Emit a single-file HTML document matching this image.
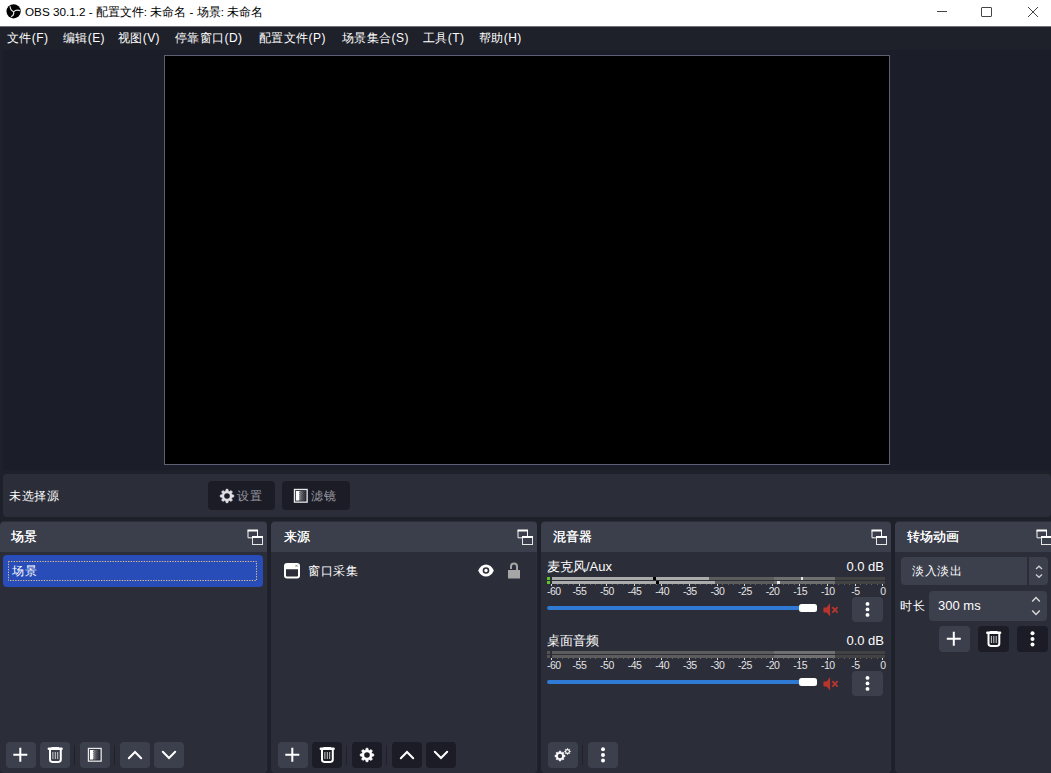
<!DOCTYPE html>
<html><head><meta charset="utf-8">
<style>
*{margin:0;padding:0;box-sizing:border-box}
html,body{width:1051px;height:773px;overflow:hidden;background:#1f212a;font-family:"Liberation Sans",sans-serif;color:#fefefe}
.a{position:absolute}
.txt{white-space:nowrap;position:absolute;line-height:1}
svg{position:absolute;overflow:visible}
#title{left:0;top:0;width:1051px;height:26px;background:#fff;color:#000;font-size:12px}
#menubar{left:0;top:26px;width:1051px;height:24px;background:#1f212a;font-size:12px;color:#fefefe}
#menubar span{position:absolute;top:6px;white-space:nowrap;line-height:1;letter-spacing:0.4px}
#prevwrap{left:3px;top:50px;width:1048px;height:420px;background:#1b1d28}
#preview{left:164px;top:55px;width:726px;height:410px;background:#000;border:1px solid #5e5f74}
#ctx{left:3px;top:474px;width:1048px;height:43px;background:#2b2d38;border-radius:4px}
.dbtn{position:absolute;background:#1b1c25;border-radius:4px}
.ebtn{position:absolute;background:#3c3f4c;border-radius:4px}
.dock{position:absolute;background:#2b2d38;border-radius:4px;box-shadow:inset -1px 0 #2e303b}
.dhead{position:absolute;background:#3b3e4b;border-radius:4px 4px 0 0;height:30px}
.dtitle{font-size:13px;text-shadow:0.4px 0 0 #fefefe}
.sep{position:absolute;width:1px;height:20px;background:#1f2029}
.lbl{font-size:10.5px;letter-spacing:-0.45px;color:#e4e4e4}
</style></head><body>
<svg width="0" height="0" style="position:absolute;left:0;top:0">
<defs>
 <symbol id="i-plus" viewBox="0 0 30 26"><path d="M14.3 5.8V19.8M7.3 12.8H21.3" stroke="#fff" stroke-width="2" fill="none"/></symbol>
 <symbol id="i-trash" viewBox="0 0 30 26"><path d="M8.8 6.8H21.6" stroke="#fff" stroke-width="2.4" stroke-linecap="round"/><path d="M12 5.8H18.4" stroke="#fff" stroke-width="1.6" stroke-linecap="round"/><path d="M10 8V17.6A2.3 2.3 0 0 0 12.3 19.9H18.5A2.3 2.3 0 0 0 20.8 17.6V8" stroke="#fff" stroke-width="2" fill="none"/><path d="M12.9 10V17M15.3 10V17M17.7 10V17" stroke="#e0e0e0" stroke-width="0.9"/></symbol>
 <symbol id="i-filter" viewBox="0 0 30 26"><rect x="8.45" y="6.45" width="12.7" height="12.7" fill="#2a2c36" stroke="#e8e8ea" stroke-width="1.3"/><rect x="9.9" y="8" width="3.4" height="9.6" fill="#fff"/><rect x="13.3" y="8.00" width="1.1" height="0.95" fill="#e6e6e6"/><rect x="13.3" y="9.90" width="1.1" height="0.95" fill="#e6e6e6"/><rect x="13.3" y="11.80" width="1.1" height="0.95" fill="#e6e6e6"/><rect x="13.3" y="13.70" width="1.1" height="0.95" fill="#e6e6e6"/><rect x="13.3" y="15.60" width="1.1" height="0.95" fill="#e6e6e6"/><rect x="14.4" y="8.95" width="1.1" height="0.95" fill="#b8b9be"/><rect x="14.4" y="10.85" width="1.1" height="0.95" fill="#b8b9be"/><rect x="14.4" y="12.75" width="1.1" height="0.95" fill="#b8b9be"/><rect x="14.4" y="14.65" width="1.1" height="0.95" fill="#b8b9be"/><rect x="14.4" y="16.55" width="1.1" height="0.95" fill="#b8b9be"/><rect x="15.5" y="8.00" width="1.1" height="0.95" fill="#8a8b93"/><rect x="15.5" y="9.90" width="1.1" height="0.95" fill="#8a8b93"/><rect x="15.5" y="11.80" width="1.1" height="0.95" fill="#8a8b93"/><rect x="15.5" y="13.70" width="1.1" height="0.95" fill="#8a8b93"/><rect x="15.5" y="15.60" width="1.1" height="0.95" fill="#8a8b93"/><rect x="16.6" y="8.95" width="1.1" height="0.95" fill="#6a6b74"/><rect x="16.6" y="10.85" width="1.1" height="0.95" fill="#6a6b74"/><rect x="16.6" y="12.75" width="1.1" height="0.95" fill="#6a6b74"/><rect x="16.6" y="14.65" width="1.1" height="0.95" fill="#6a6b74"/><rect x="16.6" y="16.55" width="1.1" height="0.95" fill="#6a6b74"/><rect x="17.7" y="8.00" width="1.1" height="0.95" fill="#50525b"/><rect x="17.7" y="9.90" width="1.1" height="0.95" fill="#50525b"/><rect x="17.7" y="11.80" width="1.1" height="0.95" fill="#50525b"/><rect x="17.7" y="13.70" width="1.1" height="0.95" fill="#50525b"/><rect x="17.7" y="15.60" width="1.1" height="0.95" fill="#50525b"/></symbol>
 <symbol id="i-up" viewBox="0 0 30 26"><path d="M8.8 16.2L15 10L21.2 16.2" stroke="#fff" stroke-width="2" fill="none" stroke-linecap="round"/></symbol>
 <symbol id="i-down" viewBox="0 0 30 26"><path d="M8.8 9.8L15 16L21.2 9.8" stroke="#fff" stroke-width="2" fill="none" stroke-linecap="round"/></symbol>
 <symbol id="i-gear" viewBox="0 0 16 16"><path d="M6.83 2.93 L6.99 1.28 L9.01 1.28 L9.17 2.93 L10.75 3.59 L12.04 2.53 L13.47 3.96 L12.41 5.25 L13.07 6.83 L14.72 6.99 L14.72 9.01 L13.07 9.17 L12.41 10.75 L13.47 12.04 L12.04 13.47 L10.75 12.41 L9.17 13.07 L9.01 14.72 L6.99 14.72 L6.83 13.07 L5.25 12.41 L3.96 13.47 L2.53 12.04 L3.59 10.75 L2.93 9.17 L1.28 9.01 L1.28 6.99 L2.93 6.83 L3.59 5.25 L2.53 3.96 L3.96 2.53 L5.25 3.59Z" fill="#fff" stroke="#fff" stroke-width="0.7" stroke-linejoin="round"/><circle cx="8" cy="8" r="2.8" fill="#1b1c25"/></symbol>
 <symbol id="i-dots" viewBox="0 0 30 26"><circle cx="15" cy="7.2" r="2" fill="#fff"/><circle cx="15" cy="12.9" r="2" fill="#fff"/><circle cx="15" cy="18.6" r="2" fill="#fff"/></symbol>
 <symbol id="i-float" viewBox="0 0 17 17"><path d="M1 1.5V8.8H5M10.5 1.5V7" stroke="#f4f4f4" stroke-width="1" fill="none"/><rect x="0.5" y="0.5" width="10.5" height="2" fill="#fff"/><rect x="5.5" y="7.5" width="10" height="8" stroke="#e6e6e6" stroke-width="1" fill="none"/><rect x="5" y="7" width="11" height="2" fill="#fff"/></symbol>
 <symbol id="i-mute" viewBox="0 0 17 14"><path d="M0.6 4.6 H3.6 L7.1 0 V13.6 L3.6 9.4 H0.6 Q0 7 0.6 4.6Z" fill="#b8352d"/><path d="M9.3 4.2L14.6 9.6M14.6 4.2L9.3 9.6" stroke="#b8352d" stroke-width="1.9"/></symbol>
<symbol id="i-gear2" viewBox="0 0 16 16"><path d="M6.83 2.93 L6.99 1.28 L9.01 1.28 L9.17 2.93 L10.75 3.59 L12.04 2.53 L13.47 3.96 L12.41 5.25 L13.07 6.83 L14.72 6.99 L14.72 9.01 L13.07 9.17 L12.41 10.75 L13.47 12.04 L12.04 13.47 L10.75 12.41 L9.17 13.07 L9.01 14.72 L6.99 14.72 L6.83 13.07 L5.25 12.41 L3.96 13.47 L2.53 12.04 L3.59 10.75 L2.93 9.17 L1.28 9.01 L1.28 6.99 L2.93 6.83 L3.59 5.25 L2.53 3.96 L3.96 2.53 L5.25 3.59Z" fill="#fff" stroke="#fff" stroke-width="0.7" stroke-linejoin="round"/><circle cx="8" cy="8" r="2.9" fill="#3c3f4c"/></symbol>
</defs></svg>
<div id="title" class="a">
  <svg style="left:6px;top:4px" width="15" height="15" viewBox="0 0 15 15">
    <circle cx="7.6" cy="7.3" r="7.1" fill="#000"/>
    <path d="M7.6 7.8 C5.4 6.8 4.2 5.2 4.1 2.2 M7.6 7.8 C9.4 6 11.5 5.8 13.9 6.6 M7.6 7.8 C8 10 7.2 11.8 5 12.6" stroke="#e6e6e6" stroke-width="1.2" fill="none"/>
  </svg>
  <span class="txt" style="left:25px;top:6px;font-size:11.7px">OBS 30.1.2 - 配置文件: 未命名 - 场景: 未命名</span>
  <div class="a" style="left:937px;top:11px;width:10px;height:1px;background:#444"></div>
  <div class="a" style="left:981px;top:7px;width:11px;height:10px;border:1px solid #444;border-radius:1px"></div>
  <svg style="left:1028px;top:7px" width="10" height="10" viewBox="0 0 10 10"><path d="M0 0L10 10M10 0L0 10" stroke="#444" stroke-width="1"/></svg>
</div>
<div id="menubar" class="a">
  <span style="left:7px">文件(F)</span>
  <span style="left:63px">编辑(E)</span>
  <span style="left:118px">视图(V)</span>
  <span style="left:175px">停靠窗口(D)</span>
  <span style="left:259px">配置文件(P)</span>
  <span style="left:342px">场景集合(S)</span>
  <span style="left:423px">工具(T)</span>
  <span style="left:479px">帮助(H)</span>
</div>
<div class="a" style="left:0;top:26px;width:1051px;height:1px;background:#707178"></div>
<div id="prevwrap" class="a"></div>
<div id="preview" class="a"></div>

<!-- context bar -->
<div id="ctx" class="a"></div>
<span class="txt" style="left:9px;top:490px;font-size:12px;letter-spacing:0.6px">未选择源</span>
<div class="dbtn" style="left:208px;top:481px;width:67px;height:29px"></div>
<div class="dbtn" style="left:282px;top:481px;width:68px;height:29px"></div>
<svg style="left:219px;top:488px" width="16" height="16" viewBox="0 0 16 16"><path d="M6.83 2.93 L6.99 1.28 L9.01 1.28 L9.17 2.93 L10.75 3.59 L12.04 2.53 L13.47 3.96 L12.41 5.25 L13.07 6.83 L14.72 6.99 L14.72 9.01 L13.07 9.17 L12.41 10.75 L13.47 12.04 L12.04 13.47 L10.75 12.41 L9.17 13.07 L9.01 14.72 L6.99 14.72 L6.83 13.07 L5.25 12.41 L3.96 13.47 L2.53 12.04 L3.59 10.75 L2.93 9.17 L1.28 9.01 L1.28 6.99 L2.93 6.83 L3.59 5.25 L2.53 3.96 L3.96 2.53 L5.25 3.59Z" fill="#dedee4" stroke="#dedee4" stroke-width="0.7" stroke-linejoin="round"/><circle cx="8" cy="8" r="2.8" fill="#1b1c25"/></svg>
<span class="txt" style="left:237px;top:490px;font-size:12px;color:#9a9ba3;letter-spacing:0.6px">设置</span>
<svg style="left:286px;top:483px" width="30" height="26" viewBox="0 0 30 26"><use href="#i-filter"/></svg>
<span class="txt" style="left:311px;top:490px;font-size:12px;color:#9a9ba3;letter-spacing:0.6px">滤镜</span>

<!-- Scenes dock -->
<div class="dock" style="left:0;top:521px;width:267px;height:252px"></div>
<div class="dhead" style="left:0;top:522px;width:267px"></div>
<span class="txt dtitle" style="left:11px;top:530px">场景</span>
<svg style="left:247px;top:529px" width="17" height="17"><use href="#i-float"/></svg>
<div class="a" style="left:3px;top:555px;width:260px;height:32px;background:#284cb8;border-radius:4px"></div>
<svg style="left:8px;top:561px" width="249" height="20"><rect x="0.5" y="0.5" width="248" height="19" fill="none" stroke="#e0c08a" stroke-width="1" stroke-dasharray="1.3 1.3"/></svg>
<span class="txt" style="left:12px;top:565px;font-size:12px;letter-spacing:0.6px">场景</span>

<div class="ebtn" style="left:6px;top:742px;width:30px;height:26px"><svg style="left:0;top:0" width="30" height="26"><use href="#i-plus"/></svg></div>
<div class="ebtn" style="left:40px;top:742px;width:30px;height:26px"><svg style="left:0;top:0" width="30" height="26"><use href="#i-trash"/></svg></div>
<div class="sep" style="left:74px;top:745px"></div>
<div class="ebtn" style="left:80px;top:742px;width:30px;height:26px"><svg style="left:0;top:0" width="30" height="26"><use href="#i-filter"/></svg></div>
<div class="sep" style="left:114px;top:745px"></div>
<div class="ebtn" style="left:120px;top:742px;width:30px;height:26px"><svg style="left:0;top:0" width="30" height="26"><use href="#i-up"/></svg></div>
<div class="ebtn" style="left:154px;top:742px;width:30px;height:26px"><svg style="left:0;top:0" width="30" height="26"><use href="#i-down"/></svg></div>

<!-- Sources dock -->
<div class="dock" style="left:271px;top:521px;width:266px;height:252px"></div>
<div class="dhead" style="left:271px;top:522px;width:266px"></div>
<span class="txt dtitle" style="left:284px;top:530px">来源</span>
<svg style="left:517px;top:529px" width="17" height="17"><use href="#i-float"/></svg>
<svg style="left:284px;top:562.5px" width="16" height="16" viewBox="0 0 16 16">
  <rect x="1" y="1" width="14" height="13.6" rx="2" fill="none" stroke="#fff" stroke-width="2"/>
  <rect x="1" y="1" width="14" height="5.2" rx="1.5" fill="#fff"/>
  <path d="M11.5 1.8 L13.5 3.8 M13.5 1.8 L11.5 3.8" stroke="#777" stroke-width="0.8"/>
</svg>
<span class="txt" style="left:308px;top:565px;font-size:12px;letter-spacing:0.6px">窗口采集</span>
<svg style="left:478px;top:564px" width="16" height="13" viewBox="0 0 16 13">
  <path d="M0.2 6.5 C3.2 -1.6 12.8 -1.6 15.8 6.5 C12.8 14.6 3.2 14.6 0.2 6.5Z" fill="#fff"/>
  <circle cx="8" cy="6.5" r="3.3" fill="#2b2d38"/>
  <circle cx="8" cy="6.5" r="1.7" fill="#fff"/>
</svg>
<svg style="left:508px;top:562px" width="12" height="17" viewBox="0 0 12 17">
  <path d="M3 7 V4.5 A3 3 0 0 1 9 4.5 V8" stroke="#a6a6a6" stroke-width="2" fill="none"/>
  <rect x="0" y="8" width="12" height="8.5" fill="#a6a6a6"/>
</svg>

<div class="ebtn" style="left:278px;top:742px;width:30px;height:26px"><svg style="left:0;top:0" width="30" height="26"><use href="#i-plus"/></svg></div>
<div class="dbtn" style="left:312px;top:742px;width:30px;height:26px"><svg style="left:0;top:0" width="30" height="26"><use href="#i-trash"/></svg></div>
<div class="sep" style="left:346px;top:745px"></div>
<div class="dbtn" style="left:352px;top:742px;width:30px;height:26px"><svg style="left:7px;top:5px" width="16" height="16"><use href="#i-gear"/></svg></div>
<div class="sep" style="left:386px;top:745px"></div>
<div class="dbtn" style="left:392px;top:742px;width:30px;height:26px"><svg style="left:0;top:0" width="30" height="26"><use href="#i-up"/></svg></div>
<div class="dbtn" style="left:426px;top:742px;width:30px;height:26px"><svg style="left:0;top:0" width="30" height="26"><use href="#i-down"/></svg></div>

<!-- Mixer dock -->
<div class="dock" style="left:541px;top:521px;width:350px;height:252px"></div>
<div class="dhead" style="left:541px;top:522px;width:350px"></div>
<span class="txt dtitle" style="left:553px;top:530px">混音器</span>
<svg style="left:871px;top:529px" width="17" height="17"><use href="#i-float"/></svg>

<span class="txt" style="left:547px;top:560px;font-size:13px">麦克风/Aux</span>
<span class="txt" style="left:784px;top:560px;width:100px;text-align:right;font-size:13px">0.0 dB</span>
<div class="a" style="left:547px;top:577px;width:3px;height:3px;background:#5bc42b"></div>
<div class="a" style="left:552px;top:577px;width:222px;height:3px;background:#5c5c5c"></div>
<div class="a" style="left:774px;top:577px;width:61px;height:3px;background:#6f6f6f"></div>
<div class="a" style="left:835px;top:577px;width:50px;height:3px;background:#424242"></div>
<div class="a" style="left:547px;top:581px;width:3px;height:3px;background:#5bc42b"></div>
<div class="a" style="left:552px;top:581px;width:222px;height:3px;background:#5c5c5c"></div>
<div class="a" style="left:774px;top:581px;width:61px;height:3px;background:#6f6f6f"></div>
<div class="a" style="left:835px;top:581px;width:50px;height:3px;background:#424242"></div>
<div class="a" style="left:552px;top:577px;width:157px;height:3px;background:#ababab"></div>
<div class="a" style="left:653px;top:577px;width:3px;height:3px;background:#000"></div>
<div class="a" style="left:801px;top:577px;width:2px;height:3px;background:#e6e6e6"></div>
<div class="a" style="left:552px;top:581px;width:163px;height:3px;background:#ababab"></div>
<div class="a" style="left:656px;top:581px;width:3px;height:3px;background:#000"></div>
<div class="a" style="left:777px;top:581px;width:3px;height:3px;background:#e6e6e6"></div>
<div class="a" style="left:551px;top:584px;width:1px;height:2px;background:#d8d8d8"></div>
<div class="a" style="left:557px;top:584px;width:1px;height:1px;background:#63646a"></div>
<div class="a" style="left:562px;top:584px;width:1px;height:1px;background:#63646a"></div>
<div class="a" style="left:568px;top:584px;width:1px;height:1px;background:#63646a"></div>
<div class="a" style="left:573px;top:584px;width:1px;height:1px;background:#63646a"></div>
<div class="a" style="left:579px;top:584px;width:1px;height:2px;background:#d8d8d8"></div>
<div class="a" style="left:584px;top:584px;width:1px;height:1px;background:#63646a"></div>
<div class="a" style="left:590px;top:584px;width:1px;height:1px;background:#63646a"></div>
<div class="a" style="left:595px;top:584px;width:1px;height:1px;background:#63646a"></div>
<div class="a" style="left:601px;top:584px;width:1px;height:1px;background:#63646a"></div>
<div class="a" style="left:606px;top:584px;width:1px;height:2px;background:#d8d8d8"></div>
<div class="a" style="left:612px;top:584px;width:1px;height:1px;background:#63646a"></div>
<div class="a" style="left:617px;top:584px;width:1px;height:1px;background:#63646a"></div>
<div class="a" style="left:623px;top:584px;width:1px;height:1px;background:#63646a"></div>
<div class="a" style="left:628px;top:584px;width:1px;height:1px;background:#63646a"></div>
<div class="a" style="left:634px;top:584px;width:1px;height:2px;background:#d8d8d8"></div>
<div class="a" style="left:639px;top:584px;width:1px;height:1px;background:#63646a"></div>
<div class="a" style="left:645px;top:584px;width:1px;height:1px;background:#63646a"></div>
<div class="a" style="left:650px;top:584px;width:1px;height:1px;background:#63646a"></div>
<div class="a" style="left:656px;top:584px;width:1px;height:1px;background:#63646a"></div>
<div class="a" style="left:661px;top:584px;width:1px;height:2px;background:#d8d8d8"></div>
<div class="a" style="left:667px;top:584px;width:1px;height:1px;background:#63646a"></div>
<div class="a" style="left:672px;top:584px;width:1px;height:1px;background:#63646a"></div>
<div class="a" style="left:678px;top:584px;width:1px;height:1px;background:#63646a"></div>
<div class="a" style="left:683px;top:584px;width:1px;height:1px;background:#63646a"></div>
<div class="a" style="left:689px;top:584px;width:1px;height:2px;background:#d8d8d8"></div>
<div class="a" style="left:695px;top:584px;width:1px;height:1px;background:#63646a"></div>
<div class="a" style="left:700px;top:584px;width:1px;height:1px;background:#63646a"></div>
<div class="a" style="left:706px;top:584px;width:1px;height:1px;background:#63646a"></div>
<div class="a" style="left:711px;top:584px;width:1px;height:1px;background:#63646a"></div>
<div class="a" style="left:717px;top:584px;width:1px;height:2px;background:#d8d8d8"></div>
<div class="a" style="left:722px;top:584px;width:1px;height:1px;background:#63646a"></div>
<div class="a" style="left:728px;top:584px;width:1px;height:1px;background:#63646a"></div>
<div class="a" style="left:733px;top:584px;width:1px;height:1px;background:#63646a"></div>
<div class="a" style="left:739px;top:584px;width:1px;height:1px;background:#63646a"></div>
<div class="a" style="left:744px;top:584px;width:1px;height:2px;background:#d8d8d8"></div>
<div class="a" style="left:750px;top:584px;width:1px;height:1px;background:#63646a"></div>
<div class="a" style="left:755px;top:584px;width:1px;height:1px;background:#63646a"></div>
<div class="a" style="left:761px;top:584px;width:1px;height:1px;background:#63646a"></div>
<div class="a" style="left:766px;top:584px;width:1px;height:1px;background:#63646a"></div>
<div class="a" style="left:772px;top:584px;width:1px;height:2px;background:#d8d8d8"></div>
<div class="a" style="left:777px;top:584px;width:1px;height:1px;background:#63646a"></div>
<div class="a" style="left:783px;top:584px;width:1px;height:1px;background:#63646a"></div>
<div class="a" style="left:788px;top:584px;width:1px;height:1px;background:#63646a"></div>
<div class="a" style="left:794px;top:584px;width:1px;height:1px;background:#63646a"></div>
<div class="a" style="left:799px;top:584px;width:1px;height:2px;background:#d8d8d8"></div>
<div class="a" style="left:805px;top:584px;width:1px;height:1px;background:#63646a"></div>
<div class="a" style="left:810px;top:584px;width:1px;height:1px;background:#63646a"></div>
<div class="a" style="left:816px;top:584px;width:1px;height:1px;background:#63646a"></div>
<div class="a" style="left:821px;top:584px;width:1px;height:1px;background:#63646a"></div>
<div class="a" style="left:827px;top:584px;width:1px;height:2px;background:#d8d8d8"></div>
<div class="a" style="left:833px;top:584px;width:1px;height:1px;background:#63646a"></div>
<div class="a" style="left:838px;top:584px;width:1px;height:1px;background:#63646a"></div>
<div class="a" style="left:844px;top:584px;width:1px;height:1px;background:#63646a"></div>
<div class="a" style="left:849px;top:584px;width:1px;height:1px;background:#63646a"></div>
<div class="a" style="left:855px;top:584px;width:1px;height:2px;background:#d8d8d8"></div>
<div class="a" style="left:860px;top:584px;width:1px;height:1px;background:#63646a"></div>
<div class="a" style="left:866px;top:584px;width:1px;height:1px;background:#63646a"></div>
<div class="a" style="left:871px;top:584px;width:1px;height:1px;background:#63646a"></div>
<div class="a" style="left:877px;top:584px;width:1px;height:1px;background:#63646a"></div>
<div class="a" style="left:882px;top:584px;width:1px;height:2px;background:#d8d8d8"></div>
<span class="txt lbl" style="left:523.8px;top:585.5px;width:60px;text-align:center">-60</span>
<span class="txt lbl" style="left:549.4px;top:585.5px;width:60px;text-align:center">-55</span>
<span class="txt lbl" style="left:577.0px;top:585.5px;width:60px;text-align:center">-50</span>
<span class="txt lbl" style="left:604.6px;top:585.5px;width:60px;text-align:center">-45</span>
<span class="txt lbl" style="left:632.2px;top:585.5px;width:60px;text-align:center">-40</span>
<span class="txt lbl" style="left:659.8px;top:585.5px;width:60px;text-align:center">-35</span>
<span class="txt lbl" style="left:687.4px;top:585.5px;width:60px;text-align:center">-30</span>
<span class="txt lbl" style="left:715.0px;top:585.5px;width:60px;text-align:center">-25</span>
<span class="txt lbl" style="left:742.6px;top:585.5px;width:60px;text-align:center">-20</span>
<span class="txt lbl" style="left:770.2px;top:585.5px;width:60px;text-align:center">-15</span>
<span class="txt lbl" style="left:797.8px;top:585.5px;width:60px;text-align:center">-10</span>
<span class="txt lbl" style="left:825.4px;top:585.5px;width:60px;text-align:center">-5</span>
<span class="txt lbl" style="left:853.0px;top:585.5px;width:60px;text-align:center">0</span>
<div class="a" style="left:547px;top:606px;width:260px;height:4px;background:#2f7ad4;border-radius:2px"></div>
<div class="a" style="left:799px;top:604px;width:18px;height:8px;background:#fff;border-radius:2.5px"></div>
<svg style="left:823px;top:603px" width="17" height="14"><use href="#i-mute"/></svg>
<div class="ebtn" style="left:852px;top:597px;width:31px;height:25px"><svg style="left:0;top:0" width="31" height="25" viewBox="0 0 30 26"><use href="#i-dots"/></svg></div>
<span class="txt" style="left:547px;top:634px;font-size:13px">桌面音频</span>
<span class="txt" style="left:784px;top:634px;width:100px;text-align:right;font-size:13px">0.0 dB</span>
<div class="a" style="left:547px;top:651px;width:3px;height:3px;background:#545454"></div>
<div class="a" style="left:552px;top:651px;width:222px;height:3px;background:#5c5c5c"></div>
<div class="a" style="left:774px;top:651px;width:61px;height:3px;background:#6f6f6f"></div>
<div class="a" style="left:835px;top:651px;width:50px;height:3px;background:#424242"></div>
<div class="a" style="left:547px;top:655px;width:3px;height:3px;background:#545454"></div>
<div class="a" style="left:552px;top:655px;width:222px;height:3px;background:#5c5c5c"></div>
<div class="a" style="left:774px;top:655px;width:61px;height:3px;background:#6f6f6f"></div>
<div class="a" style="left:835px;top:655px;width:50px;height:3px;background:#424242"></div>
<div class="a" style="left:551px;top:658px;width:1px;height:2px;background:#d8d8d8"></div>
<div class="a" style="left:557px;top:658px;width:1px;height:1px;background:#63646a"></div>
<div class="a" style="left:562px;top:658px;width:1px;height:1px;background:#63646a"></div>
<div class="a" style="left:568px;top:658px;width:1px;height:1px;background:#63646a"></div>
<div class="a" style="left:573px;top:658px;width:1px;height:1px;background:#63646a"></div>
<div class="a" style="left:579px;top:658px;width:1px;height:2px;background:#d8d8d8"></div>
<div class="a" style="left:584px;top:658px;width:1px;height:1px;background:#63646a"></div>
<div class="a" style="left:590px;top:658px;width:1px;height:1px;background:#63646a"></div>
<div class="a" style="left:595px;top:658px;width:1px;height:1px;background:#63646a"></div>
<div class="a" style="left:601px;top:658px;width:1px;height:1px;background:#63646a"></div>
<div class="a" style="left:606px;top:658px;width:1px;height:2px;background:#d8d8d8"></div>
<div class="a" style="left:612px;top:658px;width:1px;height:1px;background:#63646a"></div>
<div class="a" style="left:617px;top:658px;width:1px;height:1px;background:#63646a"></div>
<div class="a" style="left:623px;top:658px;width:1px;height:1px;background:#63646a"></div>
<div class="a" style="left:628px;top:658px;width:1px;height:1px;background:#63646a"></div>
<div class="a" style="left:634px;top:658px;width:1px;height:2px;background:#d8d8d8"></div>
<div class="a" style="left:639px;top:658px;width:1px;height:1px;background:#63646a"></div>
<div class="a" style="left:645px;top:658px;width:1px;height:1px;background:#63646a"></div>
<div class="a" style="left:650px;top:658px;width:1px;height:1px;background:#63646a"></div>
<div class="a" style="left:656px;top:658px;width:1px;height:1px;background:#63646a"></div>
<div class="a" style="left:661px;top:658px;width:1px;height:2px;background:#d8d8d8"></div>
<div class="a" style="left:667px;top:658px;width:1px;height:1px;background:#63646a"></div>
<div class="a" style="left:672px;top:658px;width:1px;height:1px;background:#63646a"></div>
<div class="a" style="left:678px;top:658px;width:1px;height:1px;background:#63646a"></div>
<div class="a" style="left:683px;top:658px;width:1px;height:1px;background:#63646a"></div>
<div class="a" style="left:689px;top:658px;width:1px;height:2px;background:#d8d8d8"></div>
<div class="a" style="left:695px;top:658px;width:1px;height:1px;background:#63646a"></div>
<div class="a" style="left:700px;top:658px;width:1px;height:1px;background:#63646a"></div>
<div class="a" style="left:706px;top:658px;width:1px;height:1px;background:#63646a"></div>
<div class="a" style="left:711px;top:658px;width:1px;height:1px;background:#63646a"></div>
<div class="a" style="left:717px;top:658px;width:1px;height:2px;background:#d8d8d8"></div>
<div class="a" style="left:722px;top:658px;width:1px;height:1px;background:#63646a"></div>
<div class="a" style="left:728px;top:658px;width:1px;height:1px;background:#63646a"></div>
<div class="a" style="left:733px;top:658px;width:1px;height:1px;background:#63646a"></div>
<div class="a" style="left:739px;top:658px;width:1px;height:1px;background:#63646a"></div>
<div class="a" style="left:744px;top:658px;width:1px;height:2px;background:#d8d8d8"></div>
<div class="a" style="left:750px;top:658px;width:1px;height:1px;background:#63646a"></div>
<div class="a" style="left:755px;top:658px;width:1px;height:1px;background:#63646a"></div>
<div class="a" style="left:761px;top:658px;width:1px;height:1px;background:#63646a"></div>
<div class="a" style="left:766px;top:658px;width:1px;height:1px;background:#63646a"></div>
<div class="a" style="left:772px;top:658px;width:1px;height:2px;background:#d8d8d8"></div>
<div class="a" style="left:777px;top:658px;width:1px;height:1px;background:#63646a"></div>
<div class="a" style="left:783px;top:658px;width:1px;height:1px;background:#63646a"></div>
<div class="a" style="left:788px;top:658px;width:1px;height:1px;background:#63646a"></div>
<div class="a" style="left:794px;top:658px;width:1px;height:1px;background:#63646a"></div>
<div class="a" style="left:799px;top:658px;width:1px;height:2px;background:#d8d8d8"></div>
<div class="a" style="left:805px;top:658px;width:1px;height:1px;background:#63646a"></div>
<div class="a" style="left:810px;top:658px;width:1px;height:1px;background:#63646a"></div>
<div class="a" style="left:816px;top:658px;width:1px;height:1px;background:#63646a"></div>
<div class="a" style="left:821px;top:658px;width:1px;height:1px;background:#63646a"></div>
<div class="a" style="left:827px;top:658px;width:1px;height:2px;background:#d8d8d8"></div>
<div class="a" style="left:833px;top:658px;width:1px;height:1px;background:#63646a"></div>
<div class="a" style="left:838px;top:658px;width:1px;height:1px;background:#63646a"></div>
<div class="a" style="left:844px;top:658px;width:1px;height:1px;background:#63646a"></div>
<div class="a" style="left:849px;top:658px;width:1px;height:1px;background:#63646a"></div>
<div class="a" style="left:855px;top:658px;width:1px;height:2px;background:#d8d8d8"></div>
<div class="a" style="left:860px;top:658px;width:1px;height:1px;background:#63646a"></div>
<div class="a" style="left:866px;top:658px;width:1px;height:1px;background:#63646a"></div>
<div class="a" style="left:871px;top:658px;width:1px;height:1px;background:#63646a"></div>
<div class="a" style="left:877px;top:658px;width:1px;height:1px;background:#63646a"></div>
<div class="a" style="left:882px;top:658px;width:1px;height:2px;background:#d8d8d8"></div>
<span class="txt lbl" style="left:523.8px;top:659.5px;width:60px;text-align:center">-60</span>
<span class="txt lbl" style="left:549.4px;top:659.5px;width:60px;text-align:center">-55</span>
<span class="txt lbl" style="left:577.0px;top:659.5px;width:60px;text-align:center">-50</span>
<span class="txt lbl" style="left:604.6px;top:659.5px;width:60px;text-align:center">-45</span>
<span class="txt lbl" style="left:632.2px;top:659.5px;width:60px;text-align:center">-40</span>
<span class="txt lbl" style="left:659.8px;top:659.5px;width:60px;text-align:center">-35</span>
<span class="txt lbl" style="left:687.4px;top:659.5px;width:60px;text-align:center">-30</span>
<span class="txt lbl" style="left:715.0px;top:659.5px;width:60px;text-align:center">-25</span>
<span class="txt lbl" style="left:742.6px;top:659.5px;width:60px;text-align:center">-20</span>
<span class="txt lbl" style="left:770.2px;top:659.5px;width:60px;text-align:center">-15</span>
<span class="txt lbl" style="left:797.8px;top:659.5px;width:60px;text-align:center">-10</span>
<span class="txt lbl" style="left:825.4px;top:659.5px;width:60px;text-align:center">-5</span>
<span class="txt lbl" style="left:853.0px;top:659.5px;width:60px;text-align:center">0</span>
<div class="a" style="left:547px;top:680px;width:260px;height:4px;background:#2f7ad4;border-radius:2px"></div>
<div class="a" style="left:799px;top:678px;width:18px;height:8px;background:#fff;border-radius:2.5px"></div>
<svg style="left:823px;top:677px" width="17" height="14"><use href="#i-mute"/></svg>
<div class="ebtn" style="left:852px;top:671px;width:31px;height:25px"><svg style="left:0;top:0" width="31" height="25" viewBox="0 0 30 26"><use href="#i-dots"/></svg></div>
<div class="ebtn" style="left:548px;top:742px;width:30px;height:26px"><svg style="left:6px;top:8.3px" width="12" height="12" viewBox="0 0 16 16"><use href="#i-gear2"/></svg><svg style="left:15.8px;top:5.8px" width="7" height="7" viewBox="0 0 16 16"><use href="#i-gear2"/></svg></div>
<div class="sep" style="left:582px;top:745px"></div>
<div class="ebtn" style="left:588px;top:742px;width:30px;height:26px"><svg style="left:0;top:0" width="30" height="26"><use href="#i-dots"/></svg></div>

<!-- Transitions dock -->
<div class="dock" style="left:895px;top:521px;width:160px;height:252px"></div>
<div class="dhead" style="left:895px;top:522px;width:160px"></div>
<span class="txt dtitle" style="left:907px;top:530px">转场动画</span>
<svg style="left:1036px;top:529px" width="17" height="17"><use href="#i-float"/></svg>
<div class="ebtn" style="left:901px;top:557px;width:147px;height:28px"></div>
<div class="a" style="left:1027px;top:557px;width:2px;height:28px;background:#2b2d38"></div>
<span class="txt" style="left:912px;top:565px;font-size:12px;letter-spacing:0.6px">淡入淡出</span>
<svg style="left:1035px;top:565px" width="8" height="14" viewBox="0 0 8 14"><path d="M1 4L4 1.2L7 4M1 9.5L4 12.3L7 9.5" stroke="#d0d0d0" stroke-width="1.3" fill="none"/></svg>
<span class="txt" style="left:900px;top:600px;font-size:12px;letter-spacing:0.6px">时长</span>
<div class="ebtn" style="left:929px;top:591px;width:118px;height:30px"></div>
<span class="txt" style="left:938px;top:599px;font-size:13px">300 ms</span>
<svg style="left:1031px;top:596px" width="10" height="20" viewBox="0 0 10 20"><path d="M1.2 5.5L5 1.6L8.8 5.5M1.2 14.5L5 18.4L8.8 14.5" stroke="#d8d8d8" stroke-width="1.5" fill="none"/></svg>
<div class="ebtn" style="left:939px;top:626px;width:31px;height:26px"><svg style="left:0;top:0" width="31" height="26" viewBox="0 0 30 26"><use href="#i-plus"/></svg></div>
<div class="dbtn" style="left:978px;top:626px;width:31px;height:26px"><svg style="left:0;top:0" width="31" height="26" viewBox="0 0 30 26"><use href="#i-trash"/></svg></div>
<div class="dbtn" style="left:1017px;top:626px;width:31px;height:26px"><svg style="left:0;top:0" width="31" height="26" viewBox="0 0 30 26"><use href="#i-dots"/></svg></div>


</body></html>
